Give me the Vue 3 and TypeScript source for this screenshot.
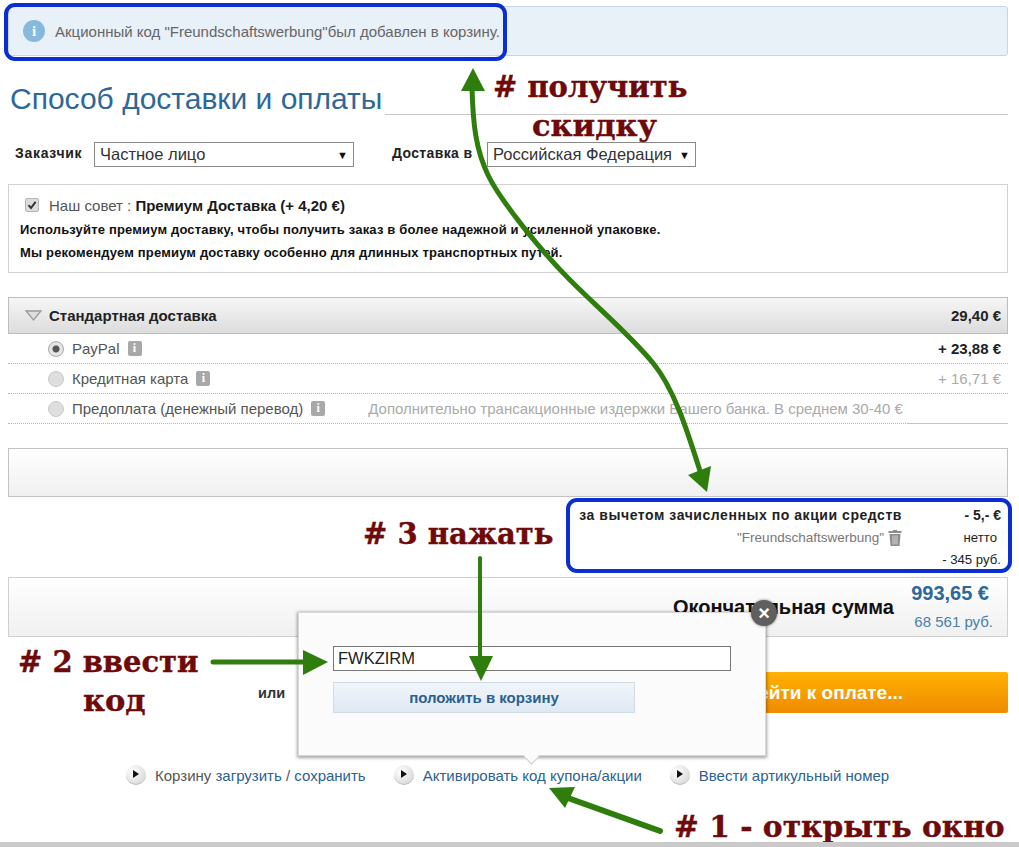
<script setup lang="ts">
interface PayRow { label: string; price: string; note?: string; active?: boolean; strong?: boolean; last?: boolean }
const rows: PayRow[] = [
  { label: 'PayPal', price: '+ 23,88 €', active: true, strong: true },
  { label: 'Кредитная карта', price: '+ 16,71 €' },
  { label: 'Предоплата (денежный перевод)', price: '', note: 'Дополнительно трансакционные издержки Вашего банка. В среднем 30-40 €', last: true },
]
</script>

<template>
  <div class="page">
    <div class="banner">
      <span class="info-dot">i</span>
      <span>Акционный код "Freundschaftswerbung"был добавлен в корзину.</span>
    </div>

    <div class="title-row">
      <h1>Способ доставки и оплаты</h1>
      <div class="title-line"></div>
    </div>

    <div class="customer-row">
      <span class="lbl">Заказчик</span>
      <div class="select sel-a"><span>Частное лицо</span><i>▼</i></div>
      <span class="lbl lbl-b">Доставка в</span>
      <div class="select sel-b"><span>Российская Федерация</span><i>▼</i></div>
    </div>

    <div class="advice">
      <div class="advice-head">
        <span class="check">
          <svg width="10" height="10" viewBox="0 0 10 10"><path d="M1.5 5.2 4 8 8.6 1.8" fill="none" stroke="#333" stroke-width="2"/></svg>
        </span>
        <span>Наш совет : <b>Премиум Доставка (+ 4,20 €)</b></span>
      </div>
      <p>Используйте премиум доставку, чтобы получить заказ в более надежной и усиленной упаковке.</p>
      <p>Мы рекомендуем премиум доставку особенно для длинных транспортных путей.</p>
    </div>

    <div class="ship-head">
      <svg class="tri" width="17" height="11" viewBox="0 0 17 11"><path d="M1 1h15L8.500 10Z" fill="#dedede" stroke="#9a9a9a" stroke-width="1.300"/></svg>
      <b>Стандартная доставка</b>
      <b class="ship-price">29,40 €</b>
    </div>
    <div v-for="r in rows" :key="r.label" class="pay-row" :class="{ last: r.last }">
      <span class="radio" :class="{ on: r.active }"></span>
      <span class="pay-label">{{ r.label }}</span>
      <span class="mini-info">i</span>
      <span v-if="r.note" class="pay-note">{{ r.note }}</span>
      <span class="pay-price" :class="{ strong: r.strong }">{{ r.price }}</span>
    </div>

    <div class="grey-box"></div>

    <div class="discount">
      <div class="d-line">
        <b class="d-left">за вычетом зачисленных по акции средств</b>
        <b class="d-right">- 5,- €</b>
      </div>
      <div class="d-line">
        <span class="d-left d-code">"Freundschaftswerbung"
          <svg width="14" height="17" viewBox="0 0 14 17"><path d="M5 1h4v1h4.500v2H.5V2H5ZM1.500 5h11l-1 12h-9Z" fill="#8d8d8d"/><path d="M5 6.500v9M7 6.500v9M9 6.500v9" stroke="#d6d6d6"/></svg>
        </span>
        <span class="d-right d-net">нетто</span>
      </div>
      <div class="d-line">
        <span class="d-left"></span>
        <span class="d-right">- 345 руб.</span>
      </div>
    </div>

    <div class="total-box">
      <b class="total-label">Окончательная сумма</b>
      <div class="total-values">
        <b>993,65 €</b>
        <span>68 561 руб.</span>
      </div>
    </div>

    <div class="checkout-row">
      <b class="or">или</b>
      <div class="pay-btn">Перейти к оплате...</div>
    </div>

    <div class="links">
      <span class="link"><i class="bullet"></i><span>Корзину <a>загрузить</a> / <a>сохранить</a></span></span>
      <span class="link"><i class="bullet"></i><a>Активировать код купона/акции</a></span>
      <span class="link"><i class="bullet"></i><a>Ввести артикульный номер</a></span>
    </div>

    <div class="popup">
      <div class="code-input">FWKZIRM</div>
      <div class="cart-btn">положить в корзину</div>
      <span class="tail"></span>
      <span class="close">×</span>
    </div>

    <div class="hl hl-a"></div>
    <div class="hl hl-b"></div>

    <svg class="arrows" width="1019" height="847" viewBox="0 0 1019 847">
      <g fill="none" stroke="#2f7d0c" stroke-linecap="round">
        <path d="M472 88C473 125 476 150 488 175S540 250 570 280 630 335 653 363 690 440 701 474" stroke-width="5"/>
        <path d="M480 558V660" stroke-width="4"/>
        <path d="M213 662H306" stroke-width="5"/>
        <path d="M660 831 568 798" stroke-width="6"/>
      </g>
      <g fill="#2f7d0c">
        <path d="M473 68 461 91H485Z"/>
        <path d="M707 492 688 475 711 466Z"/>
        <path d="M481 681 469 656H493Z"/>
        <path d="M328 662 303 650V675Z"/>
        <path d="M549 788 575 787 565 808Z"/>
      </g>
    </svg>

    <div class="note n1">#&nbsp;получить</div>
    <div class="note n2">скидку</div>
    <div class="note n3">#&nbsp;3&nbsp;нажать</div>
    <div class="note n4">#&nbsp;2&nbsp;ввести</div>
    <div class="note n5">код</div>
    <div class="note n6">#&nbsp;1&nbsp;-&nbsp;открыть&nbsp;окно</div>

    <div class="bottom-bar"></div>
  </div>
</template>

<style>
html, body { margin: 0; background: #fff; }
</style>

<style scoped>
.page {
  position: relative;
  box-sizing: border-box;
  width: 1019px;
  height: 847px;
  overflow: hidden;
  padding: 6px 11px 0 8px;
  background: #fff;
  font-family: "Liberation Sans", Arial, sans-serif;
  font-size: 15px;
  color: #222;
}
a { color: #2b6290; }

.banner {
  box-sizing: border-box;
  height: 50px;
  display: flex;
  align-items: center;
  gap: 10px;
  padding-left: 14px;
  background: #e8f0f8;
  border: 1px solid #c6d6e6;
  border-radius: 3px;
  color: #666;
  font-size: 15px;
}
.info-dot {
  width: 22px;
  height: 22px;
  border-radius: 50%;
  background: #86b9dd;
  color: #fff;
  font: bold 15px/22px "Liberation Serif", serif;
  text-align: center;
}

.title-row { display: flex; height: 72px; }
h1 {
  margin: 25px 0 0 2px;
  font-size: 30px;
  line-height: 36px;
  font-weight: 400;
  color: #2c689a;
  white-space: nowrap;
}
.title-line { flex: 1; margin-left: 3px; height: 1px; margin-top: 58px; background: #c9c9c9; }

.customer-row { display: flex; align-items: center; height: 25px; margin-top: 14px; }
.lbl { margin-left: 7px; width: 79px; font-weight: 700; font-size: 14px; letter-spacing: .7px; margin-top: -4px; white-space: nowrap; }
.lbl-b { margin-left: 38px; width: 95px; letter-spacing: .35px; }
.select {
  box-sizing: border-box;
  height: 25px;
  display: flex;
  align-items: center;
  justify-content: space-between;
  padding: 0 5px;
  border: 1px solid #8a8a8a;
  font-size: 16.500px;
  color: #333;
}
.select i { font-style: normal; font-size: 11px; color: #111; }
.sel-a { width: 260px; }
.sel-b { width: 209px; }

.advice {
  box-sizing: border-box;
  height: 89px;
  margin-top: 17px;
  padding: 11px 11px;
  border: 1px solid #d2d2d2;
  color: #111;
}
.advice-head { display: flex; align-items: center; gap: 10px; height: 18px; margin: 0 0 0 5px; color: #555; font-size: 15px; }
.advice-head b { color: #1a1a1a; }
.check {
  box-sizing: border-box;
  width: 14px;
  height: 14px;
  display: flex;
  align-items: center;
  justify-content: center;
  background: #dcdcdc;
  border: 1px solid #b5b5b5;
  border-radius: 2px;
}
.advice p { margin: 5px 0 0; font-size: 13px; line-height: 18px; font-weight: 700; letter-spacing: .17px; white-space: nowrap; }
.advice .advice-head + p { margin-top: 7px; }

.ship-head {
  box-sizing: border-box;
  height: 37px;
  margin-top: 24px;
  display: flex;
  align-items: center;
  padding: 0 6px 0 16px;
  background: linear-gradient(#f6f6f6, #dcdcdc);
  border: 1px solid #bdbdbd;
}
.tri { margin-right: 7px; }
.ship-price { margin-left: auto; }

.pay-row {
  position: relative;
  box-sizing: border-box;
  height: 30px;
  display: flex;
  align-items: center;
  padding: 0 7px 0 40px;
  border-bottom: 1px dotted #b5b5b5;
  color: #555;
}
.pay-row.last::after {
  content: "";
  position: absolute;
  right: 0;
  bottom: -1px;
  width: 101px;
  border-bottom: 1px solid #c4c4c4;
}
.radio {
  box-sizing: border-box;
  width: 16px;
  height: 16px;
  border-radius: 50%;
  background: #dedede;
  border: 1px solid #c8c8c8;
  margin-right: 8px;
  flex: none;
}
.radio.on { background: radial-gradient(circle, #555 0 3px, #e4e4e4 4px); border-color: #aaa; }
.mini-info {
  width: 14px;
  height: 15px;
  margin-left: 8px;
  border-radius: 2px;
  background: #a8a8a8;
  color: #fff;
  font: bold 12px/15px "Liberation Serif", serif;
  text-align: center;
}
.pay-note { margin-left: 43px; color: #aaa; white-space: nowrap; }
.pay-price { margin-left: auto; color: #aaa; white-space: nowrap; }
.pay-price.strong { color: #222; font-weight: 700; }

.grey-box {
  box-sizing: border-box;
  height: 49px;
  margin-top: 24px;
  border: 1px solid #c2c2c2;
  background: linear-gradient(#fff, #f0f0f0);
}

.discount { margin-top: 7px; height: 73px; padding-right: 7px; font-size: 13.200px; color: #222; }
.d-line { display: flex; justify-content: flex-end; height: 22px; align-items: center; }
.d-left { width: 330px; text-align: right; white-space: nowrap; font-size: 14px; letter-spacing: .55px; }
.d-right { width: 99px; text-align: right; white-space: nowrap; }
.d-line:first-child .d-right { font-size: 14px; }
.d-code { display: flex; justify-content: flex-end; align-items: center; gap: 4px; color: #777; font-size: 13.500px; letter-spacing: 0; }
.d-net { padding-right: 4px; box-sizing: border-box; }

.total-box {
  box-sizing: border-box;
  height: 60px;
  display: flex;
  justify-content: flex-end;
  align-items: center;
  padding-right: 14px;
  border: 1px solid #cfcfcf;
  background: linear-gradient(#fff, #f0f0f0);
}
.total-label { font-size: 20px; color: #111; margin-right: 16px; white-space: nowrap; }
.total-values { display: flex; flex-direction: column; align-items: flex-end; gap: 10px; width: 83px; margin-top: -1px; color: #2c689a; }
.total-values b { font-size: 20px; line-height: 21px; margin-right: 4px; white-space: nowrap; }
.total-values span { font-size: 15px; line-height: 16px; white-space: nowrap; color: #4a80a8; }

.checkout-row { display: flex; align-items: center; height: 41px; margin-top: 35px; }
.or { margin-left: 250px; width: 50px; font-size: 14.500px; color: #333; }
.pay-btn {
  box-sizing: border-box;
  flex: 1;
  height: 41px;
  display: flex;
  align-items: center;
  justify-content: flex-end;
  padding-right: 105px;
  border-radius: 2px;
  background: linear-gradient(#ffb200, #ef8a00);
  color: #fff;
  font-weight: 700;
  font-size: 19px;
}

.links { display: flex; align-items: center; height: 24px; margin-top: 50px; margin-left: 118px; }
.link { display: flex; align-items: center; gap: 9px; color: #555; margin-right: 28px; white-space: nowrap; }
.bullet {
  position: relative;
  width: 20px;
  height: 20px;
  flex: none;
  border-radius: 50%;
  background: radial-gradient(circle at 35% 35%, #fff, #cfcfcf);
  border-bottom: 1px solid #bbb;
  box-sizing: border-box;
}
.bullet::after {
  content: "";
  position: absolute;
  left: 7px;
  top: 5px;
  border-left: 6px solid #111;
  border-top: 4.500px solid transparent;
  border-bottom: 4.500px solid transparent;
}

.popup {
  position: absolute;
  left: 298px;
  top: 612px;
  box-sizing: border-box;
  width: 468px;
  height: 144px;
  padding: 33px 0 0 34px;
  background: #fbfbfb;
  border: 1px solid #d8d8d8;
  box-shadow: 0 1px 3px 1px rgba(0, 0, 0, .35);
}
.code-input {
  box-sizing: border-box;
  width: 398px;
  height: 25px;
  padding-left: 4px;
  border: 1px solid #777;
  background: #fff;
  color: #222;
  font-size: 16.500px;
  line-height: 23px;
}
.cart-btn {
  box-sizing: border-box;
  width: 302px;
  height: 31px;
  margin-top: 11px;
  border: 1px solid #cfdbe5;
  background: linear-gradient(#f0f5fa, #dfe9f3);
  color: #2c5f91;
  font-weight: 700;
  font-size: 15px;
  line-height: 29px;
  text-align: center;
}
.tail {
  position: absolute;
  left: 225px;
  bottom: -9px;
  width: 14px;
  height: 14px;
  background: #fbfbfb;
  transform: rotate(45deg) scale(.75);
  border-right: 1px solid #bbb;
  border-bottom: 1px solid #bbb;
}
.close {
  position: absolute;
  right: -12px;
  top: -13px;
  width: 26px;
  height: 26px;
  border-radius: 50%;
  background: #5f5f5f;
  box-shadow: 0 0 3px rgba(0, 0, 0, .5);
  color: #fff;
  font-weight: 700;
  font-size: 20px;
  line-height: 26px;
  text-align: center;
}

.hl { position: absolute; box-sizing: border-box; border: 4px solid #0a2ed2; border-radius: 11px; }
.hl-a { left: 4px; top: 3px; width: 503px; height: 58px; }
.hl-b { left: 566px; top: 498px; width: 446px; height: 75px; }

.arrows { position: absolute; left: 0; top: 0; pointer-events: none; }

.note {
  position: absolute;
  font-family: "DejaVu Serif", serif;
  font-weight: 700;
  font-size: 29px;
  line-height: 34px;
  color: #6e0a0a;
  -webkit-text-stroke: .4px #6e0a0a;
  white-space: nowrap;
}
.n1 { left: 493px; top: 70px; }
.n2 { left: 532px; top: 108px; font-size: 30.500px; }
.n3 { left: 363px; top: 517px; }
.n4 { left: 18px; top: 645px; }
.n5 { left: 83px; top: 683px; font-size: 30.500px; }
.n6 { left: 674px; top: 810px; font-size: 29.700px; }

.bottom-bar { position: absolute; left: 0; right: 0; bottom: 0; height: 5px; background: #c9c9c9; }
</style>
